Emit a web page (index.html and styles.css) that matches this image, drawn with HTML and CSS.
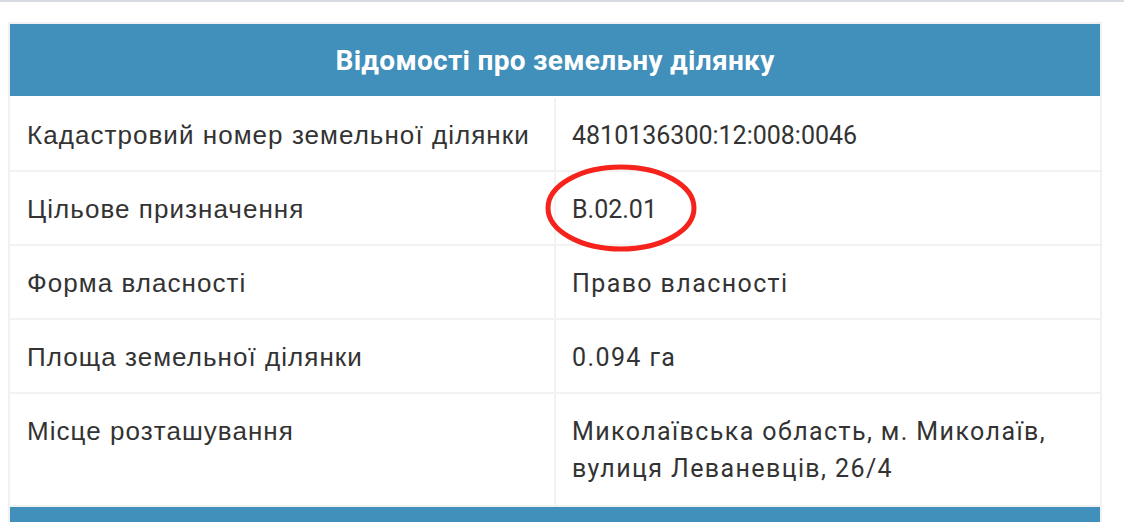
FILE: index.html
```html
<!DOCTYPE html>
<html lang="uk">
<head>
<meta charset="utf-8">
<link rel="stylesheet" href="styles.css">
</head>
<body>
<div class="topline"></div>
<div class="card">
  <div class="card-head">Відомості про земельну ділянку</div>
  <div class="row">
    <div class="cell label">Кадастровий номер земельної ділянки</div>
    <div class="cell value num">4810136300:12:008:0046</div>
  </div>
  <div class="row">
    <div class="cell label">Цільове призначення</div>
    <div class="cell value num marked">В.02.01
      <svg class="circle" width="156" height="92" viewBox="0 0 156 92"><ellipse cx="78" cy="46" rx="73" ry="41" fill="none" stroke="#f5231c" stroke-width="5"/></svg>
    </div>
  </div>
  <div class="row">
    <div class="cell label">Форма власності</div>
    <div class="cell value">Право власності</div>
  </div>
  <div class="row">
    <div class="cell label">Площа земельної ділянки</div>
    <div class="cell value">0.094 га</div>
  </div>
  <div class="row last">
    <div class="cell label">Місце розташування</div>
    <div class="cell value">Миколаївська область, м. Миколаїв, вулиця Леваневців, 26/4</div>
  </div>
</div>
<div class="card next">
  <div class="card-head"></div>
</div>
</body>
</html>
```
FILE: styles.css
```css
html, body {
  margin: 0;
  padding: 0;
  background: #ffffff;
  overflow: hidden;
}
body {
  width: 1124px;
  height: 522px;
}
.topline {
  height: 2px;
  background: #d7dae3;
  margin-bottom: 20px;
}
.card {
  margin-left: 8px;
  width: 1090px;
  border: 2px solid #f1f1f1;
  border-top-color: #eef0f3;
}
.card-head {
  background: #418fbb;
  color: #ffffff;
  height: 72px;
  margin-bottom: 2px;
  display: flex;
  align-items: center;
  justify-content: center;
  font-family: Roboto, "Liberation Sans", sans-serif;
  font-weight: 700;
  font-size: 28px;
  letter-spacing: 0.3px;
}
.row {
  display: grid;
  grid-template-columns: 546px 544px;
  border-bottom: 2px solid #f2f2f2;
}
.row.last {
  border-bottom: none;
}
.row.last .cell {
  padding-bottom: 18px;
}
.cell {
  padding: 19px 16px 16px 17px;
  line-height: 37px;
  color: #333333;
}
.label {
  font-family: "Liberation Sans", Arial, sans-serif;
  font-size: 26px;
  letter-spacing: 1.05px;
  border-right: 2px solid #f2f2f2;
}
.value {
  font-family: Roboto, "Liberation Sans", sans-serif;
  font-size: 25px;
  letter-spacing: 1.4px;
  padding-left: 16px;
  padding-right: 30px;
}
.value.num {
  letter-spacing: 0;
}
.marked {
  position: relative;
}
.circle {
  position: absolute;
  left: -13px;
  top: -10px;
}
.next {
  border-bottom: none;
  border-top: none;
}
.next .card-head {
  height: 20px;
  margin-bottom: 0;
}
```
